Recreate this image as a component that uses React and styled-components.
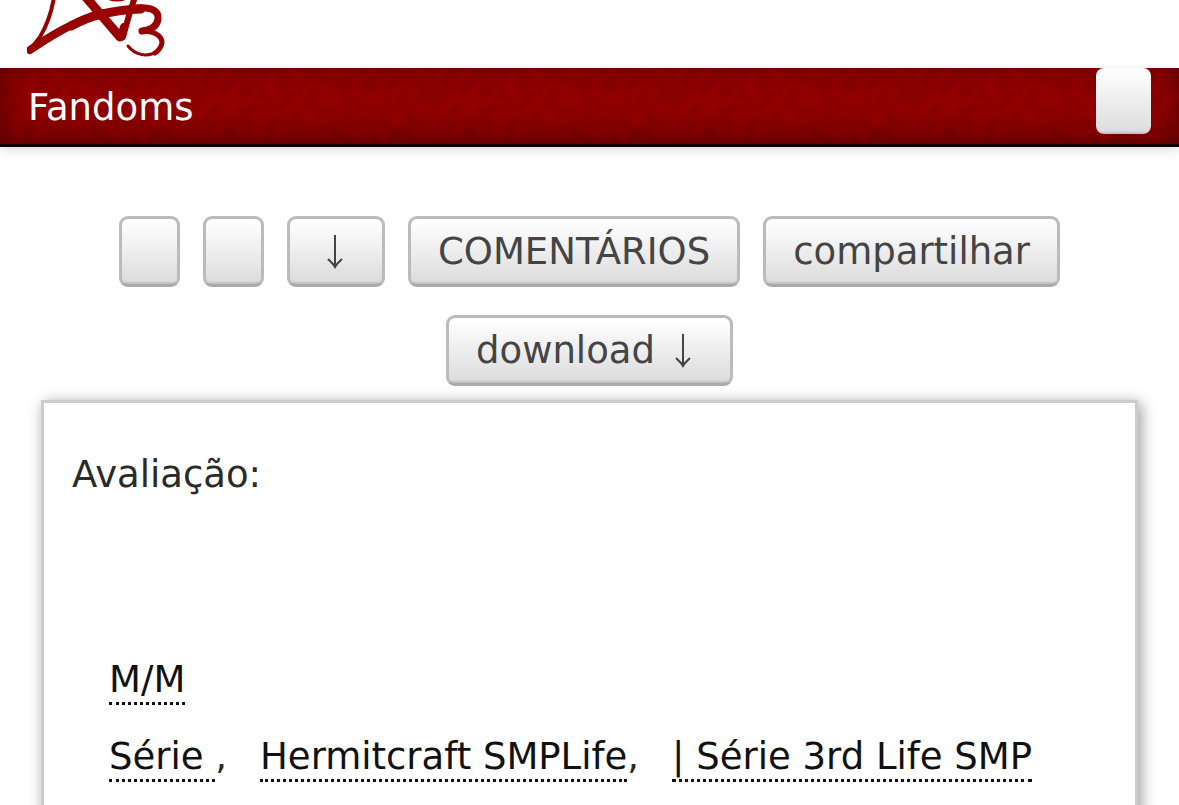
import React from "react";
import styled, { createGlobalStyle, css } from "styled-components";

const tags = ["Série ", "Hermitcraft SMPLife", "| Série 3rd Life SMP"];

const grain = `url("data:image/svg+xml,${encodeURIComponent(
  `<svg xmlns="http://www.w3.org/2000/svg" width="240" height="120">
    <filter id="n" x="0" y="0" width="100%" height="100%">
      <feTurbulence type="fractalNoise" baseFrequency="0.08" numOctaves="3" stitchTiles="stitch"/>
      <feColorMatrix values="0 0 0 0 0  0 0 0 0 0  0 0 0 0 0  0.2 0 0 0 -0.03"/>
    </filter>
    <rect width="240" height="120" filter="url(#n)"/>
  </svg>`
)}")`;

const Logo = () => (
  <LogoSvg viewBox="0 0 140 68" fill="none" stroke="#900" strokeLinecap="round" strokeLinejoin="round">
    <path d="M27 -3C25 10 20 25 13 37L3 50" strokeWidth="4" />
    <path d="M3 50C22 37 44 23 74 13" strokeWidth="8" />
    <path d="M44 26C60 17 84 10 114 9" strokeWidth="9" />
    <path d="M110 8C125 7 132 11 131 19C130 26 124 30 115 31" strokeWidth="7" />
    <path d="M115 31C126 31 135 35 135 43C134 48 131 51 128 53" strokeWidth="5" />
    <path d="M130 51C121 58 108 55 101 46" strokeWidth="3" />
    <path d="M57 -5C68 8 80 22 93 37" strokeWidth="9" />
    <path d="M108 -3C104 8 100 22 96 37" strokeWidth="6" />
    <path d="M97 27L94 37" strokeWidth="8" />
    <path d="M78 -3C86 1 94 1 102 -3" strokeWidth="3" />
  </LogoSvg>
);

const ArrowDown = () => (
  <ArrowSvg viewBox="0 0 38 34" aria-hidden="true">
    <path d="M18 0V32M11 24L18 31L25 24" />
    <path d="M15 29L18 34L21 29Z" fill="#444" stroke="none" />
  </ArrowSvg>
);

const App = () => {
  return (
    <Page>
      <GlobalStyle />
      <Header>
        <a href="#home" aria-label="Home">
          <Logo />
        </a>
      </Header>

      <Nav>
        <NavLink href="#fandoms">Fandoms</NavLink>
        <MenuButton type="button" aria-label="Menu" />
      </Nav>

      {/* WORK ACTIONS */}
      <Actions>
        <Button type="button" $empty aria-label="Previous" />
        <Button type="button" $empty aria-label="Next" />
        <Button type="button" aria-label="Index">
          <ArrowDown />
        </Button>
        <Button type="button">COMENTÁRIOS</Button>
        <Button type="button">compartilhar</Button>
        <Button type="button">
          download
          <ArrowDown />
        </Button>
      </Actions>

      {/* WORK META */}
      <Meta>
        <dt>Avaliação:</dt>
        <TagRow>
          <Tag href="#mm">M/M</Tag>
        </TagRow>
        <TagRow>
          {tags.map((tag, i) => (
            <span key={tag}>
              <Tag href={`#tag-${i}`}>{tag}</Tag>
              {i < tags.length - 1 && ","}
            </span>
          ))}
        </TagRow>
      </Meta>
    </Page>
  );
};

const GlobalStyle = createGlobalStyle`
  * {
    box-sizing: border-box;
  }

  body {
    margin: 0;
    background: #fff;
    color: #2a2a2a;
    font-family: Verdana, "DejaVu Sans", sans-serif;
    font-size: 37px;
    line-height: 44px;
  }
`;

const Page = styled.div`
  overflow: hidden;
`;

const Header = styled.header`
  height: 68px;
  padding: 0 27px;
`;

const LogoSvg = styled.svg`
  display: block;
  width: 140px;
  height: 68px;
`;

const Nav = styled.nav`
  display: flex;
  justify-content: space-between;
  align-items: flex-start;
  height: 79px;
  padding: 0 28px;
  border-bottom: 3px solid #100;
  background: ${grain}, #900;
  box-shadow:
    inset 0 -6px 30px rgba(0, 0, 0, 0.4),
    0 3px 10px rgba(0, 0, 0, 0.15);
`;

const NavLink = styled.a`
  padding: 18px 0 14px;
  color: #fff;
  text-decoration: none;
`;

const raised = css`
  background: linear-gradient(#fff 2%, #ddd 95%, #bbb 100%);
  color: #444;
  font: inherit;
  cursor: pointer;
`;

const MenuButton = styled.button`
  ${raised}
  width: 55px;
  height: 66px;
  border: none;
  border-radius: 8px;
`;

const Actions = styled.div`
  display: flex;
  flex-wrap: wrap;
  justify-content: center;
  gap: 28px 23px;
  padding: 69px 41px 14px;
`;

const Button = styled.button`
  ${raised}
  display: flex;
  align-items: center;
  gap: 10px;
  width: ${(p) => (p.$empty ? "61px" : "auto")};
  height: 71px;
  padding: 0 27px;
  border: 3px solid #bbb;
  border-bottom-color: #aaa;
  border-radius: 9px;
`;

const ArrowSvg = styled.svg`
  width: 38px;
  height: 34px;
  fill: none;
  stroke: #444;
  stroke-width: 2;
`;

const Meta = styled.dl`
  display: flex;
  flex-direction: column;
  margin: 0 41px;
  padding: 50px 28px 80px;
  border: 3px solid #ccc;
  background: #fff;
  box-shadow: 3px 3px 14px rgba(0, 0, 0, 0.4);

  dt {
    margin-bottom: 161px;
  }
`;

const TagRow = styled.dd`
  display: flex;
  flex-wrap: wrap;
  gap: 33px;
  margin: 0 0 30px 37px;
`;

const Tag = styled.a`
  display: inline-block;
  border-bottom: 3px dotted #111;
  color: #111;
  text-decoration: none;
  white-space: pre;
`;

export default App;
